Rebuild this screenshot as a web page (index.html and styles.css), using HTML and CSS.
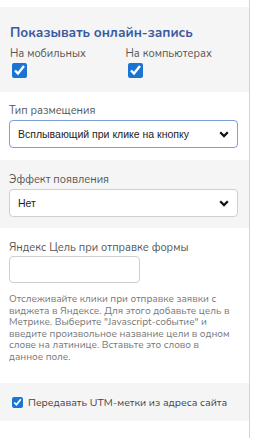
FILE: index.html
```html
<!DOCTYPE html>
<html lang="ru">
<head>
    <meta charset="UTF-8">
    <meta name="viewport" content="width=device-width, initial-scale=1.0">
    <title>Настройки виджета</title>
    <link rel="stylesheet" href="styles.css">
</head>
<body>

    <div class="panel">
        <div class="gap-top"></div>

        <div class="section gray show-block">
            <h3 class="title">Показывать онлайн-запись</h3>
            <div class="devices">
                <label class="device">
                    <span>На мобильных</span>
                    <input type="checkbox" class="big-check" checked>
                </label>
                <label class="device">
                    <span>На компьютерах</span>
                    <input type="checkbox" class="big-check" checked>
                </label>
            </div>
        </div>

        <div class="section place-block">
            <div class="label">Тип размещения</div>
            <div class="select-wrap">
                <select class="select focused">
                    <option>Всплывающий при клике на кнопку</option>
                </select>
                <svg class="chev" width="10" height="7" viewBox="0 0 10 7"><path d="M1.2 1.3 L5 5.1 L8.8 1.3" fill="none" stroke="#111" stroke-width="2.2"/></svg>
            </div>
        </div>

        <div class="section gray effect-block">
            <div class="label">Эффект появления</div>
            <div class="select-wrap">
                <select class="select">
                    <option>Нет</option>
                </select>
                <svg class="chev" width="10" height="7" viewBox="0 0 10 7"><path d="M1.2 1.3 L5 5.1 L8.8 1.3" fill="none" stroke="#111" stroke-width="2.2"/></svg>
            </div>
        </div>

        <div class="section goal-block">
            <div class="label">Яндекс Цель при отправке формы</div>
            <input type="text" class="text-input">
            <p class="help">Отслеживайте клики при отправке заявки с виджета в Яндексе. Для этого добавьте цель в Метрике. Выберите "Javascript-событие" и введите произвольное название цели в одном слове на латинице. Вставьте это слово в данное поле.</p>
        </div>

        <div class="section gray utm-block">
            <label class="utm">
                <input type="checkbox" class="small-check" checked>
                <span>Передавать UTM-метки из адреса сайта</span>
            </label>
        </div>

        <div class="gap-bottom"></div>
    </div>

</body>
</html>
```

FILE: styles.css
```css
body { margin: 0; background: #fff; font-family: "Nunito", "Lato", "Noto Sans", sans-serif; }
.panel { width: 249px; border-right: 1px solid #d4d4d4; min-height: 438px; }
.gap-top { height: 7px; }
.section { padding: 0 9px; }
.gray { background: #f5f5f6; }

.show-block { padding-top: 18px; padding-bottom: 14px; }
.title { margin: 0; font-size: 13.5px; line-height: 16px; font-weight: bold; color: #3b5a9e; padding-left: 1px; }
.devices { display: flex; margin-top: 6px; }
.device { display: flex; flex-direction: column; align-items: flex-start; width: 115px; font-size: 11px; line-height: 13px; color: #555; padding-left: 1px; }
.big-check { width: 15px; height: 15px; margin: 3px 0 0 2px; accent-color: #1b74d1; }

.label { font-size: 11px; line-height: 12px; color: #555; }
.place-block { padding-top: 13px; padding-bottom: 12px; }
.effect-block { padding-top: 14px; padding-bottom: 11px; }
.select-wrap { position: relative; margin-top: 3px; width: 229px; }
.select {
    appearance: none; -webkit-appearance: none; width: 229px; height: 28px;
    border: 1px solid #cfcfcf; border-radius: 4px; background: #fff;
    font-family: "Liberation Sans", Arial, sans-serif; font-size: 10.5px; color: #222;
    padding: 0 24px 0 8px; outline: none;
}
.select.focused { border-color: #7c9fd8; }
.chev { position: absolute; right: 9px; top: 11px; pointer-events: none; }

.goal-block { padding-top: 14px; padding-bottom: 20px; }
.text-input {
    display: block; margin-top: 2px; width: 131px; height: 27px; box-sizing: border-box;
    border: 1px solid #cfcfcf; border-radius: 4px; background: #fff; outline: none;
}
.help { margin: 11px 0 0; font-size: 10px; line-height: 11.5px; color: #777; padding-right: 10px; }

.utm-block { height: 38px; display: flex; align-items: center; }
.utm { display: flex; align-items: center; font-size: 10.5px; color: #444; }
.small-check { width: 11px; height: 11px; margin: 0 5px 0 3px; accent-color: #1b74d1; }
.gap-bottom { height: 21px; }
```
